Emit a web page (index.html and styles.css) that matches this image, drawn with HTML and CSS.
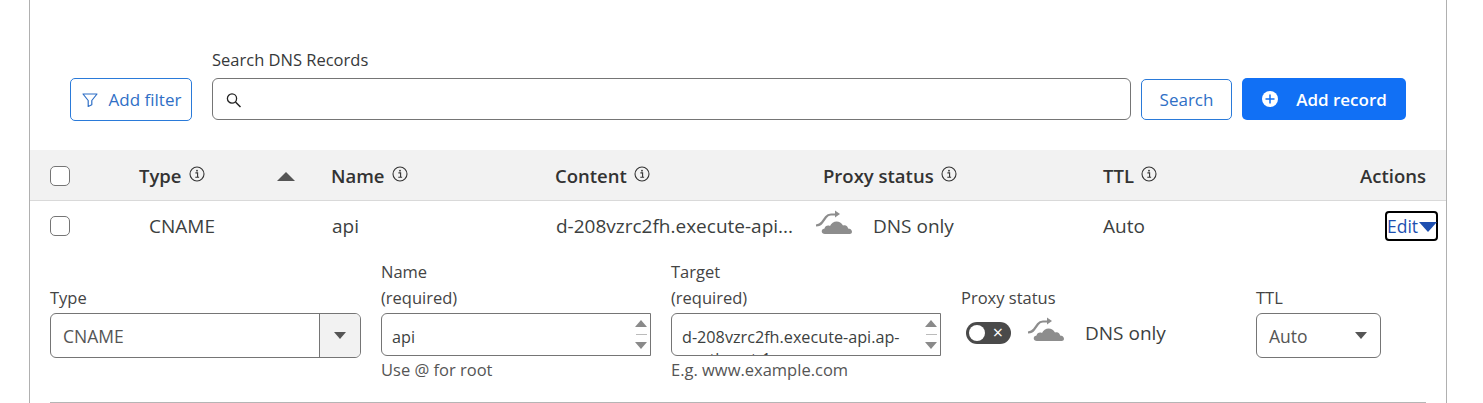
FILE: index.html
```html
<!DOCTYPE html>
<html lang="en">
  <head>
    <meta charset="UTF-8" />
    <meta name="viewport" content="width=device-width, initial-scale=1.0" />
    <title>DNS Records</title>
    <link rel="stylesheet" href="styles.css">
  </head>
  <body>
    <svg class="defs" width="0" height="0">
      <symbol id="info" viewBox="0 0 16 16">
        <circle cx="8" cy="8" r="7" fill="none" stroke="currentColor" stroke-width="1.1"></circle>
        <path d="M6.400 6.900h2.200v4.200M6.300 11.300h3.800" fill="none" stroke="currentColor" stroke-width="1.1"></path>
        <circle cx="8" cy="4.700" r="0.900" fill="currentColor"></circle>
      </symbol>
      <symbol id="cloud" viewBox="0 0 40 28">
        <path d="M1 16.500c3-.2 4.500-1 6-3l4-5.500c1.500-2 2.500-2.500 5-2.500h5" fill="none" stroke="currentColor" stroke-width="2.200"></path>
        <path d="M20 1.500l5 3.500-5 3.500z" fill="currentColor"></path>
        <path d="M10 25c-4 0-4.500-5-.5-5.500 .5-2.500 3-3.500 5.500-2.500 2-5.500 10-6.500 13-.5 2.500-1 5 .5 5 3 4.500 0 5.500 5.500 1.500 5.500z" fill="currentColor"></path>
      </symbol>
    </svg>

    <div class="panel">
      <div class="toolbar">
        <button class="btn outline filter">
          <svg width="18" height="18" viewBox="0 0 18 18">
            <path d="M2 3h14l-5.200 6.500v4.300l-3.600 1.700v-6z" fill="none" stroke="currentColor" stroke-width="1.200" stroke-linejoin="round"></path>
          </svg>
          Add filter
        </button>
        <div class="search">
          <label class="search-label">Search DNS Records</label>
          <div class="search-box">
            <svg width="18" height="18" viewBox="0 0 18 18">
              <circle cx="7" cy="7.500" r="4.600" fill="none" stroke="#222" stroke-width="1.300"></circle>
              <path d="M10.500 11l5 5" stroke="#222" stroke-width="1.500"></path>
            </svg>
            <input type="text" />
          </div>
        </div>
        <button class="btn outline search-btn">Search</button>
        <button class="btn primary">
          <svg width="18" height="18" viewBox="0 0 18 18">
            <circle cx="9" cy="9" r="8" fill="#fff"></circle>
            <path d="M9 4.500v9M4.500 9h9" stroke="#1170f5" stroke-width="1.500"></path>
          </svg>
          Add record
        </button>
      </div>

      <div class="table">
        <div class="row head">
          <span class="check"></span>
          <div class="cell type-head">
            <span class="heading">Type <svg class="info"><use href="#info"></use></svg></span>
            <span class="sort"></span>
          </div>
          <span class="heading">Name <svg class="info"><use href="#info"></use></svg></span>
          <span class="heading">Content <svg class="info"><use href="#info"></use></svg></span>
          <span class="heading">Proxy status <svg class="info"><use href="#info"></use></svg></span>
          <span class="heading">TTL <svg class="info"><use href="#info"></use></svg></span>
          <span class="heading actions">Actions</span>
        </div>
        <div class="row body">
          <span class="check"></span>
          <span class="type-value">CNAME</span>
          <span class="name-value">api</span>
          <span class="content-value">d-208vzrc2fh.execute-api...</span>
          <span class="proxy-value"><svg class="cloud"><use href="#cloud"></use></svg> DNS only</span>
          <span class="ttl-value">Auto</span>
          <div class="actions"><button class="edit">Edit<span class="edit-caret"></span></button></div>
        </div>
      </div>

      <div class="edit-form">
        <div class="field">
          <label>Type</label>
          <div class="select type-select">
            <span>CNAME</span>
            <span class="select-arrow"><span class="caret"></span></span>
          </div>
        </div>
        <div class="field with-hint">
          <label>Name<br />(required)</label>
          <div class="text-box">
            <textarea rows="1">api</textarea>
            <span class="spinner"><span class="up"></span><span class="bar"></span><span class="down"></span></span>
          </div>
          <span class="hint">Use @ for root</span>
        </div>
        <div class="field with-hint">
          <label>Target<br />(required)</label>
          <div class="text-box">
            <textarea rows="2">d-208vzrc2fh.execute-api.ap-southeast-1.amazonaws.com</textarea>
            <span class="spinner"><span class="up"></span><span class="bar"></span><span class="down"></span></span>
          </div>
          <span class="hint">E.g. www.example.com</span>
        </div>
        <div class="field">
          <label>Proxy status</label>
          <div class="proxy-edit">
            <span class="toggle"><span class="knob"></span><span class="x">×</span></span>
            <svg class="cloud"><use href="#cloud"></use></svg>
            <span>DNS only</span>
          </div>
        </div>
        <div class="field">
          <label>TTL</label>
          <div class="select ttl-select">
            <span>Auto</span>
            <span class="caret"></span>
          </div>
        </div>
      </div>
    </div>
  </body>
</html>
```

FILE: styles.css
```css
* {
  margin: 0;
  padding: 0;
  box-sizing: border-box;
}
body {
  height: 403px;
  overflow: hidden;
  background: #fff;
  color: #36393a;
  font-family: "Open Sans", "Noto Sans", sans-serif;
}
.defs {
  position: absolute;
}
.panel {
  width: 1418px;
  height: 403px;
  margin-left: 29px;
  border-left: 1px solid #b0b0b0;
  border-right: 1px solid #b0b0b0;
  overflow: hidden;
}

/* toolbar */
.toolbar {
  height: 150px;
  display: flex;
  align-items: flex-end;
  padding: 0 40px 29px 40px;
}
.btn {
  display: flex;
  align-items: center;
  justify-content: center;
  font-family: inherit;
  border-radius: 5px;
  background: #fff;
}
.btn.outline {
  border: 1px solid #2a7ad9;
  color: #2f6fc6;
  font-size: 17px;
}
.filter {
  width: 122px;
  height: 43px;
  gap: 10px;
}
.search {
  display: flex;
  flex-direction: column;
  width: 919px;
  margin: 0 10px 1px 20px;
}
.search-label {
  font-size: 16.500px;
  line-height: 22px;
  margin-bottom: 7px;
}
.search-box {
  height: 42px;
  display: flex;
  align-items: center;
  gap: 4px;
  padding: 2px 12px 0;
  border: 1px solid #757575;
  border-radius: 6px;
}
.search-box input {
  flex: 1;
  border: 0;
  outline: 0;
}
.search-btn {
  width: 91px;
  height: 41px;
  margin: 0 10px 1px 0;
}
.primary {
  width: 164px;
  height: 42px;
  gap: 17px;
  margin-bottom: 1px;
  border: 0;
  background: #1170f5;
  color: #fff;
  font-size: 17px;
  font-weight: 600;
}

/* table */
.row {
  display: grid;
  grid-template-columns: 89px 192px 224px 268px 280px 160px 1fr;
  align-items: center;
  padding: 0 20px;
}
.head {
  height: 51px;
  background: #f2f2f2;
  border-bottom: 1px solid #d9d9d9;
}
.body {
  height: 50px;
  font-size: 19px;
  color: #3c3f40;
}
.check {
  width: 20px;
  height: 20px;
  background: #fff;
  border: 1px solid #757575;
  border-radius: 5px;
}
.head .check {
  margin-top: 2px;
}
.heading {
  display: flex;
  align-items: center;
  gap: 7px;
  font-size: 18.500px;
  font-weight: 600;
  color: #333;
}
.info {
  width: 16px;
  height: 16px;
  margin-top: -2px;
  color: #333;
}
.cell {
  display: flex;
  align-items: center;
}
.type-head {
  justify-content: space-between;
  padding-right: 36px;
}
.sort {
  width: 0;
  height: 0;
  margin-top: 3px;
  border-left: 9px solid transparent;
  border-right: 9px solid transparent;
  border-bottom: 9px solid #555;
}
.actions {
  display: flex;
  justify-content: flex-end;
}
.type-value {
  padding-left: 10px;
}
.name-value {
  padding-left: 1px;
}
.content-value {
  padding-left: 1px;
  white-space: nowrap;
}
.proxy-value {
  display: flex;
  align-items: center;
  gap: 18px;
  margin-left: -8px;
}
.cloud {
  width: 40px;
  height: 28px;
  color: #8d8d8d;
}
.proxy-value .cloud {
  margin-top: -6px;
}
.edit {
  display: flex;
  align-items: center;
  width: 53px;
  height: 30px;
  margin-right: -12px;
  font-family: inherit;
  font-size: 17.500px;
  color: #1d4fb0;
  background: #fff;
  border: 2px solid #000;
  border-radius: 4px;
}
.edit-caret {
  width: 0;
  height: 0;
  margin: 2px 0 0 1px;
  border-left: 9px solid transparent;
  border-right: 9px solid transparent;
  border-top: 10px solid #1d4fb0;
}

/* edit form */
.edit-form {
  display: grid;
  grid-template-columns: 331px 290px 290px 295px 125px;
  align-items: start;
  height: 152px;
  margin: 0 20px;
  padding-top: 8px;
  border-bottom: 1px solid #b5b5b5;
}
.field {
  display: flex;
  flex-direction: column;
  height: 124px;
  padding-bottom: 25px;
}
.field.with-hint {
  padding-bottom: 0;
}
.field label {
  margin-top: auto;
  font-size: 16.500px;
  line-height: 26px;
  color: #444;
}
.field.with-hint label {
  margin-top: 0;
}
.select {
  display: flex;
  align-items: center;
  justify-content: space-between;
  flex: none;
  height: 45px;
  margin-top: 2px;
  font-size: 17.500px;
  color: #555;
  border: 1px solid #757575;
  border-radius: 6px;
}
.type-select {
  width: 311px;
  padding-left: 12px;
}
.select-arrow {
  display: flex;
  align-items: center;
  justify-content: center;
  width: 41px;
  height: 100%;
  background: #f2f2f2;
  border-left: 1px solid #757575;
  border-radius: 0 5px 5px 0;
}
.ttl-select {
  width: 125px;
  padding: 0 13px 0 12px;
}
.caret {
  width: 0;
  height: 0;
  border-left: 6px solid transparent;
  border-right: 6px solid transparent;
  border-top: 7px solid #555;
}
.text-box {
  position: relative;
  flex: none;
  width: 270px;
  height: 43px;
  margin-top: 2px;
}
.text-box textarea {
  display: block;
  width: 100%;
  height: 100%;
  padding: 12px 24px 0 10px;
  font-family: inherit;
  font-size: 16.200px;
  line-height: 22px;
  color: #3c3f40;
  border: 1px solid #757575;
  border-radius: 6px 0 0 6px;
  outline: 0;
  resize: none;
  overflow: hidden;
}
.spinner {
  position: absolute;
  top: 7px;
  right: 4px;
  display: flex;
  flex-direction: column;
  align-items: center;
  gap: 7px;
}
.up,
.down {
  width: 0;
  height: 0;
  border-left: 6px solid transparent;
  border-right: 6px solid transparent;
}
.up {
  border-bottom: 7px solid #8a8a8a;
}
.down {
  border-top: 7px solid #8a8a8a;
}
.bar {
  width: 11px;
  height: 1px;
  background: #bbb;
}
.hint {
  margin-top: 3px;
  font-size: 16.500px;
  line-height: 22px;
  color: #555;
}
.proxy-edit {
  display: flex;
  align-items: center;
  flex: none;
  height: 40px;
  margin-top: 2px;
  margin-bottom: 5px;
  font-size: 19px;
  color: #3c3f40;
}
.proxy-edit .cloud {
  margin: -6px 18px 0 16px;
}
.toggle {
  position: relative;
  width: 45px;
  height: 22px;
  margin-left: 5px;
  background: #4a4a4a;
  border-radius: 11px;
}
.knob {
  position: absolute;
  top: 3px;
  left: 3px;
  width: 16px;
  height: 16px;
  background: #fff;
  border-radius: 50%;
}
.x {
  position: absolute;
  top: -3px;
  right: 8px;
  font-size: 18px;
  line-height: 26px;
  color: #fff;
}
```
